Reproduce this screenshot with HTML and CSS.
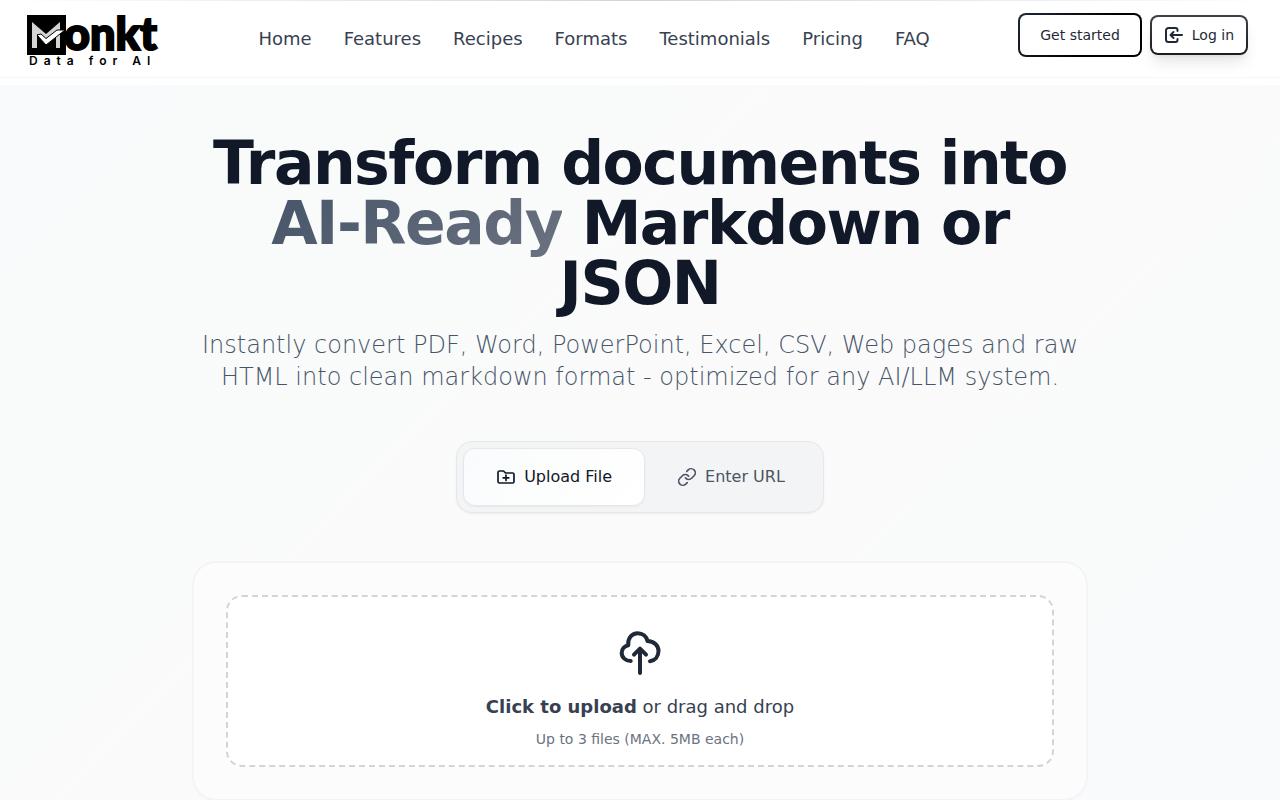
FILE: index.html
```html
<!DOCTYPE html>
<html lang="en">
<head>
  <title>Monkt - Data for AI</title>
  <meta charset="UTF-8">
  <meta name="viewport" content="width=device-width, initial-scale=1.0">
  <link rel="stylesheet" href="styles.css">
</head>
<body>
<header class="header">
  <a href="#" class="logo" aria-label="Monkt home">
    <svg width="146" height="60" viewBox="0 0 146 60">
      <text class="logo-word" x="40" y="41">onkt</text>
      <rect x="3" y="6" width="39" height="40"/>
      <path d="M8 39V13l14 12 14-12v26h-4V24L22 33l-9-8v14z" fill="#d4d4d4"/>
      <path d="M13 26l4-1 5 4.500L33 21h8L22 36z" fill="#fff" stroke="#000" stroke-width="1"/>
      <text class="logo-tag" x="5" y="56">Data for AI</text>
    </svg>
  </a>
  <nav class="nav">
    <a href="#">Home</a>
    <a href="#features">Features</a>
    <a href="#recipes">Recipes</a>
    <a href="#formats">Formats</a>
    <a href="#testimonials">Testimonials</a>
    <a href="#pricing">Pricing</a>
    <a href="#faq">FAQ</a>
  </nav>
  <div class="actions">
    <button type="button" class="btn btn-start">Get started</button>
    <button type="button" class="btn btn-login">
      <svg class="icon" viewBox="0 0 20 20" stroke-width="2">
        <path d="M13.500 6V5A2 2 0 0 0 11.500 3H4.500A2.500 2.500 0 0 0 2 5.500v9A2.500 2.500 0 0 0 4.500 17h7a2 2 0 0 0 2-2v-1M18 10H6.500M9.500 7L6.500 10l3 3"/>
      </svg>
      Log in
    </button>
  </div>
</header>

<main class="hero">
  <div class="hero-inner">
    <h1>Transform documents into <span class="highlight">AI-Ready</span> Markdown or JSON</h1>
    <p class="subtitle">Instantly convert PDF, Word, PowerPoint, Excel, CSV, Web pages and raw HTML into clean markdown format - optimized for any AI/LLM system.</p>

    <div class="tabs">
      <button type="button" class="tab active">
        <svg class="icon" viewBox="0 0 20 20" stroke-width="1.7">
          <path d="M2 5.500A1.500 1.500 0 0 1 3.500 4H7.500l2 2h7A1.500 1.500 0 0 1 18 7.500v7a1.500 1.500 0 0 1-1.500 1.500h-13A1.500 1.500 0 0 1 2 14.500zM10 8v5.500M7.200 10.800h5.600"/>
        </svg>
        Upload File
      </button>
      <button type="button" class="tab">
        <svg class="icon" viewBox="0 0 24 24" stroke-width="2">
          <path d="M10 13a5 5 0 0 0 7.540.540l3-3a5 5 0 0 0-7.070-7.070l-1.720 1.710M14 11a5 5 0 0 0-7.540-.540l-3 3a5 5 0 0 0 7.070 7.070l1.710-1.710"/>
        </svg>
        Enter URL
      </button>
    </div>

    <div class="card">
      <label class="dropzone" for="file">
        <svg class="cloud" viewBox="0 0 48 48">
          <path d="M14.700 32C9.500 32 5.700 28.300 5.700 23.900c0-3.900 2.800-6.900 6.600-7.700C11.500 9 16 4.200 21.700 4.200c4.800 0 8.800 3.300 9.800 7.800 6.500.3 11 4.500 11 10s-3.500 9.500-8.500 10.200M24 44V19.800M18 25.700l6-6 6 6"/>
        </svg>
        <span class="drop-text"><b>Click to upload</b> or drag and drop</span>
        <span class="drop-hint">Up to 3 files (MAX. 5MB each)</span>
        <input type="file" id="file" multiple hidden>
      </label>
    </div>
  </div>
</main>
</body>
</html>
```
FILE: styles.css
```css
* {
  box-sizing: border-box;
}

body {
  margin: 0;
  background: #fff;
  color: #111827;
  font-family: "DejaVu Sans", sans-serif;
}

button {
  font-family: inherit;
  cursor: pointer;
}

.header {
  display: flex;
  justify-content: space-between;
  align-items: center;
  padding: 9px 32px 8px 24px;
  margin-bottom: 7px;
  border-bottom: 1px solid #f7f7f8;
  background: linear-gradient(90deg, #fff, #d1d5db, #fff) top / 100% 1px no-repeat #fff;
}

.logo {
  display: flex;
}

.logo svg {
  overflow: visible;
}

.logo-word {
  font-family: "Lato", sans-serif;
  font-size: 45px;
  font-weight: 900;
  stroke: #000;
  stroke-width: 2px;
}

.logo-tag {
  font-family: "Inter", sans-serif;
  font-size: 12px;
  font-weight: 600;
  letter-spacing: 6px;
}

.nav {
  display: flex;
  gap: 32px;
}

.nav a {
  color: #374151;
  font-size: 18px;
  line-height: 28px;
  text-decoration: none;
}

.actions {
  display: flex;
  align-items: center;
  gap: 8px;
  padding-bottom: 8px;
}

.btn {
  display: flex;
  align-items: center;
  gap: 8px;
  border: 2px solid transparent;
  border-radius: 8px;
  font-size: 14px;
  line-height: 20px;
}

.btn-start {
  padding: 10px 20px;
  color: #1f2937;
  background: linear-gradient(#fff, #fff) padding-box, linear-gradient(135deg, #1f2937, #000 60%) border-box;
}

.btn-login {
  padding: 8px 12px;
  color: #1f2937;
  background: linear-gradient(#fff, #fff) padding-box, linear-gradient(#404048, #1c1c1c) border-box;
  box-shadow: 0 10px 15px -3px rgba(0, 0, 0, 0.1), 0 4px 6px -4px rgba(0, 0, 0, 0.1);
}

.icon {
  width: 20px;
  height: 20px;
  fill: none;
  stroke: currentColor;
  stroke-linecap: round;
  stroke-linejoin: round;
}

.hero {
  padding: 48px 16px;
  background: linear-gradient(135deg, #f8fafc, #f9fbfa 20%, #fafafa 55%, #f9fbfa 75%, #f9fafc 85%, #f9fafc);
}

.hero-inner {
  display: flex;
  flex-direction: column;
  align-items: center;
  max-width: 896px;
  margin: 0 auto;
}

h1 {
  margin: 0 0 16px;
  font-size: 60px;
  line-height: 60px;
  font-weight: 700;
  letter-spacing: -0.025em;
  text-align: center;
}

.highlight {
  color: transparent;
  background: linear-gradient(135deg, #475569, #6b7280);
  background-clip: text;
  -webkit-background-clip: text;
}

.subtitle {
  margin: 0 0 48px;
  color: #475569;
  font-size: 24px;
  line-height: 32px;
  font-weight: 200;
  text-align: center;
}

.tabs {
  display: flex;
  padding: 6px;
  margin-bottom: 48px;
  border: 1px solid #e5e7eb;
  border-radius: 16px;
  background: #f3f4f6;
  box-shadow: 0 1px 2px rgba(0, 0, 0, 0.05);
}

.tab {
  display: flex;
  align-items: center;
  gap: 8px;
  padding: 16px 32px;
  border: 0;
  border-radius: 12px;
  background: none;
  color: #4b5563;
  font-size: 16px;
  line-height: 24px;
}

.tab.active {
  border: 1px solid #e5e7eb;
  background: linear-gradient(135deg, #fafbfc, #fff);
  color: #111827;
  box-shadow: 0 1px 2px rgba(0, 0, 0, 0.05);
}

.card {
  width: 100%;
  padding: 32px;
  border: 2px solid #f3f4f6;
  border-radius: 24px;
  background: #fcfcfc;
}

.dropzone {
  display: flex;
  flex-direction: column;
  align-items: center;
  padding: 32px 32px 16px;
  border: 2px dashed #d1d5db;
  border-radius: 16px;
  background: #fff;
  text-align: center;
  cursor: pointer;
}

.cloud {
  width: 48px;
  height: 48px;
  margin-bottom: 16px;
  fill: none;
  stroke: #1f2937;
  stroke-width: 4;
  stroke-linecap: round;
  stroke-linejoin: round;
}

.drop-text {
  margin-bottom: 8px;
  color: #374151;
  font-size: 18px;
  line-height: 28px;
}

.drop-hint {
  color: #6b7280;
  font-size: 14px;
  line-height: 20px;
}
```
